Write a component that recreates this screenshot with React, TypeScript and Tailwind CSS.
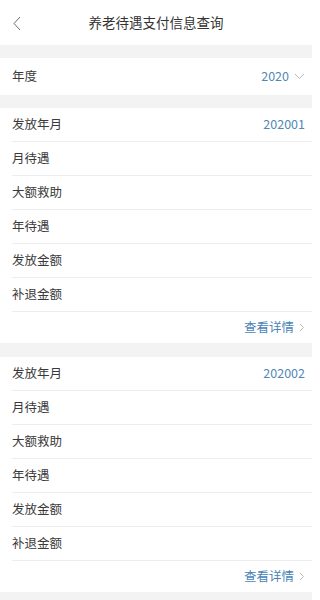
import React from 'react';

const font = { fontFamily: '"Noto Sans CJK SC", "Noto Sans", sans-serif' };

const labels = ['发放年月', '月待遇', '大额救助', '年待遇', '发放金额', '补退金额'];

function Chevron({ dir }: { dir: 'left' | 'right' | 'down' }) {
  if (dir === 'left') {
    return (
      <svg width="10" height="15" viewBox="0 0 10 15" fill="none">
        <path d="M8 1 L2 7.5 L8 14" stroke="#6b6b6b" strokeWidth="1" />
      </svg>
    );
  }
  if (dir === 'down') {
    return (
      <svg width="11" height="7" viewBox="0 0 11 7" fill="none">
        <path d="M1 1 L5.5 5.5 L10 1" stroke="#b8b8b8" strokeWidth="1" />
      </svg>
    );
  }
  return (
    <svg width="6" height="9" viewBox="0 0 6 9" fill="none">
      <path d="M1 1 L4.5 4.5 L1 8" stroke="#b8b8b8" strokeWidth="1" />
    </svg>
  );
}

function PayCard({ month }: { month: string }) {
  return (
    <div className="bg-white">
      {labels.map((label, i) => (
        <div key={label} className="pl-3">
          <div className="h-[34px] flex items-center justify-between pr-[7px] border-b border-[#ededed]">
            <span className="text-[12.5px] text-[#3a3a3a]">{label}</span>
            {i === 0 && <span className="text-[12.5px] text-[#5288b4]">{month}</span>}
          </div>
        </div>
      ))}
      <div className="h-[31px] flex items-center justify-end gap-[5px] pr-[7px]">
        <span className="text-[12.5px] text-[#4a84b8]">查看详情</span>
        <Chevron dir="right" />
      </div>
    </div>
  );
}

export default function App() {
  return (
    <div className="w-[312px] h-[600px] overflow-hidden bg-[#f3f3f3]" style={font}>
      <div className="h-[45px] bg-white flex items-center relative">
        <div className="absolute left-[12px] top-[16px]">
          <Chevron dir="left" />
        </div>
        <div className="flex-1 text-center text-[13.5px] text-[#333]">养老待遇支付信息查询</div>
      </div>
      <div className="h-[13px]" />
      <div className="h-[37px] bg-white flex items-center justify-between pl-3 pr-[7px]">
        <span className="text-[12.5px] text-[#3a3a3a]">年度</span>
        <div className="flex items-center gap-[5px]">
          <span className="text-[12.5px] text-[#5288b4]">2020</span>
          <Chevron dir="down" />
        </div>
      </div>
      <div className="h-[13px]" />
      <PayCard month="202001" />
      <div className="h-[14px]" />
      <PayCard month="202002" />
    </div>
  );
}
